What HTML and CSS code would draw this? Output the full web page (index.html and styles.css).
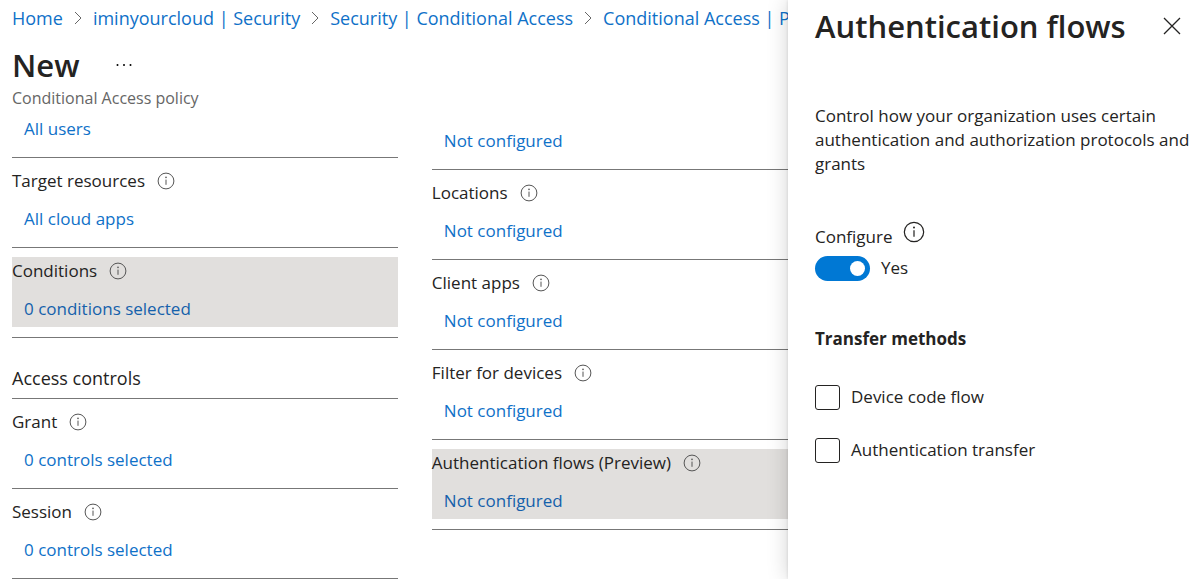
FILE: index.html
```html
<!DOCTYPE html>
<html lang="en">

<head>
    <meta charset="UTF-8">
    <meta name="viewport" content="width=device-width, initial-scale=1.0">
    <title>New - Conditional Access policy</title>
    <link rel="stylesheet" href="styles.css">
</head>

<body>
    <svg class="symbols" aria-hidden="true">
        <symbol id="info" viewBox="0 0 18 18">
            <circle cx="9" cy="9" r="7.9" fill="none" stroke="currentColor" />
            <path d="M9 7.6v5.2" fill="none" stroke="currentColor" />
            <circle cx="9" cy="5.4" r="0.8" fill="currentColor" />
        </symbol>
        <symbol id="chevron" viewBox="0 0 8 14">
            <path d="M1 1l6 6-6 6" fill="none" stroke="currentColor" />
        </symbol>
    </svg>

    <div class="page">
        <main class="blade">
            <nav class="breadcrumb" aria-label="Breadcrumb">
                <a href="#">Home</a>
                <svg class="chevron"><use href="#chevron" /></svg>
                <a href="#">iminyourcloud | Security</a>
                <svg class="chevron"><use href="#chevron" /></svg>
                <a href="#">Security | Conditional Access</a>
                <svg class="chevron"><use href="#chevron" /></svg>
                <a href="#">Conditional Access | P</a>
            </nav>

            <header class="title">
                <h1>New</h1>
                <button class="more" aria-label="More">
                    <svg viewBox="0 0 16 4" width="16" height="4">
                        <circle cx="1.5" cy="2" r="1" />
                        <circle cx="8" cy="2" r="1" />
                        <circle cx="14.5" cy="2" r="1" />
                    </svg>
                </button>
            </header>
            <p class="subtitle">Conditional Access policy</p>

            <div class="columns">
                <div class="column">
                    <section class="item first">
                        <a href="#">All users</a>
                    </section>
                    <section class="item">
                        <div class="box">
                            <div class="label">Target resources <svg class="info"><use href="#info" /></svg></div>
                            <a href="#">All cloud apps</a>
                        </div>
                    </section>
                    <section class="item">
                        <div class="box selected">
                            <div class="label">Conditions <svg class="info"><use href="#info" /></svg></div>
                            <a href="#">0 conditions selected</a>
                        </div>
                    </section>
                    <h2>Access controls</h2>
                    <section class="item">
                        <div class="box">
                            <div class="label">Grant <svg class="info"><use href="#info" /></svg></div>
                            <a href="#">0 controls selected</a>
                        </div>
                    </section>
                    <section class="item">
                        <div class="box">
                            <div class="label">Session <svg class="info"><use href="#info" /></svg></div>
                            <a href="#">0 controls selected</a>
                        </div>
                    </section>
                </div>

                <div class="column conditions">
                    <section class="item first">
                        <a href="#">Not configured</a>
                    </section>
                    <section class="item">
                        <div class="box">
                            <div class="label">Locations <svg class="info"><use href="#info" /></svg></div>
                            <a href="#">Not configured</a>
                        </div>
                    </section>
                    <section class="item">
                        <div class="box">
                            <div class="label">Client apps <svg class="info"><use href="#info" /></svg></div>
                            <a href="#">Not configured</a>
                        </div>
                    </section>
                    <section class="item">
                        <div class="box">
                            <div class="label">Filter for devices <svg class="info"><use href="#info" /></svg></div>
                            <a href="#">Not configured</a>
                        </div>
                    </section>
                    <section class="item">
                        <div class="box selected">
                            <div class="label">Authentication flows (Preview) <svg class="info"><use href="#info" /></svg></div>
                            <a href="#">Not configured</a>
                        </div>
                    </section>
                </div>
            </div>
        </main>

        <aside class="panel">
            <header class="panel-header">
                <h2>Authentication flows</h2>
                <button class="close" aria-label="Close">
                    <svg viewBox="0 0 18 18" width="18" height="18">
                        <path d="M1 1l16 16M17 1L1 17" fill="none" stroke="currentColor" stroke-width="1.3" />
                    </svg>
                </button>
            </header>
            <p class="description">Control how your organization uses certain authentication and authorization protocols and grants</p>

            <div class="configure">
                <label for="configure">Configure</label>
                <svg class="info large"><use href="#info" /></svg>
            </div>
            <div class="switch">
                <input type="checkbox" role="switch" id="configure" checked>
                <span>Yes</span>
            </div>

            <h3>Transfer methods</h3>
            <label class="check"><input type="checkbox">Device code flow</label>
            <label class="check"><input type="checkbox">Authentication transfer</label>
        </aside>
    </div>
</body>

</html>
```
FILE: styles.css
```css
* {
    box-sizing: border-box;
}

body {
    margin: 0;
    font-family: "Open Sans", "Noto Sans", sans-serif;
    font-size: 17px;
    line-height: 28px;
    color: #242322;
    background: #fff;
}

h1,
h2,
h3,
p {
    margin: 0;
}

a {
    color: #0f71c8;
    text-decoration: none;
}

button {
    padding: 0;
    border: 0;
    background: none;
    color: inherit;
}

svg {
    flex: none;
}

.symbols {
    display: none;
}

.page {
    display: flex;
    height: 100vh;
    overflow: hidden;
}

.blade {
    flex: 1;
    min-width: 0;
    padding: 4px 0 0 12px;
    overflow: hidden;
}

.breadcrumb {
    display: flex;
    align-items: center;
    gap: 11px;
    font-size: 18px;
    white-space: nowrap;
}

.chevron {
    width: 8px;
    height: 14px;
    color: #666;
}

.title {
    display: flex;
    align-items: center;
    gap: 37px;
    padding-top: 11px;
}

.title h1 {
    font-size: 31px;
    font-weight: 600;
    line-height: 44px;
}

.more {
    display: flex;
}

.subtitle {
    font-size: 16px;
    line-height: 22px;
    color: #666;
}

.columns {
    display: grid;
    grid-template-columns: 13fr 12fr;
    gap: 34px;
    padding-top: 6px;
}

.conditions {
    padding-top: 12px;
}

.item {
    padding: 9px 0 10px;
    border-bottom: 1px solid #777;
}

.item.first {
    padding: 0 0 14px;
}

.item a {
    display: block;
    padding-left: 12px;
}

.box {
    display: flex;
    flex-direction: column;
    gap: 10px;
    padding-bottom: 4px;
}

.label {
    display: flex;
    align-items: center;
    gap: 12px;
}

.selected {
    background: #e1dfdd;
}

.selected a {
    color: #1561ab;
}

.info {
    width: 18px;
    height: 18px;
    color: #555;
}

.column h2 {
    padding: 26px 0 6px;
    border-bottom: 1px solid #777;
    font-size: 18px;
    font-weight: 400;
}

.panel {
    flex: 0 0 412px;
    padding: 4px 10px 0 27px;
    background: #fff;
    box-shadow: 0 0 20px rgba(0, 0, 0, 0.18), 0 0 3px rgba(0, 0, 0, 0.12);
}

.panel-header {
    display: flex;
    align-items: center;
    justify-content: space-between;
    padding-right: 9px;
}

.panel-header h2 {
    font-size: 31px;
    font-weight: 600;
    line-height: 44px;
}

.close {
    display: flex;
}

.description {
    padding-top: 56px;
    line-height: 24px;
}

.configure {
    display: flex;
    gap: 10px;
    padding-top: 45px;
}

.info.large {
    width: 22px;
    height: 22px;
    color: #242322;
}

.configure label {
    padding-top: 2px;
}

.switch {
    display: flex;
    align-items: center;
    gap: 11px;
    padding-top: 3px;
}

.switch input {
    display: flex;
    align-items: center;
    justify-content: flex-end;
    appearance: none;
    width: 55px;
    height: 25px;
    margin: 0;
    padding: 0 5px;
    border-radius: 13px;
    background: #0078d4;
}

.switch input::before {
    content: "";
    width: 15px;
    height: 15px;
    border-radius: 50%;
    background: #fff;
}

.panel h3 {
    padding: 43px 0 30px;
    font-size: 17px;
    font-weight: 700;
}

.check {
    display: flex;
    align-items: center;
    gap: 11px;
    margin-bottom: 25px;
}

.check input {
    appearance: none;
    width: 25px;
    height: 25px;
    margin: 0;
    border: 1px solid #242322;
    border-radius: 3px;
}
```
